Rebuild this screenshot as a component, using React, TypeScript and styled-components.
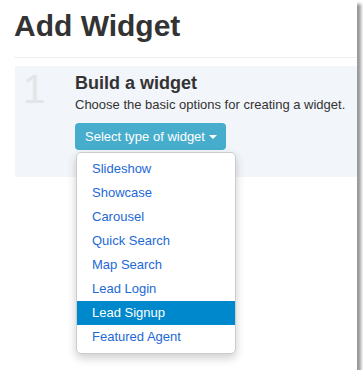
import React from 'react';
import styled, { createGlobalStyle } from 'styled-components';

const GlobalStyle = createGlobalStyle`
  html, body {
    margin: 0;
    padding: 0;
    background: #fff;
  }
  body {
    font-family: "Liberation Sans", Arial, sans-serif;
    color: #333;
  }
`;

const widgetTypes = [
  'Slideshow',
  'Showcase',
  'Carousel',
  'Quick Search',
  'Map Search',
  'Lead Login',
  'Lead Signup',
  'Featured Agent',
];

const Frame = styled.div`
  width: 357px;
  height: 370px;
  background: #fff;
  box-shadow: 4px 4px 3px rgba(0, 0, 0, 0.4);
  overflow: hidden;
  padding-left: 14px;
  box-sizing: border-box;
`;

const Heading = styled.h1`
  margin: 0;
  padding-top: 9px;
  font-size: 30px;
  line-height: 33px;
  font-weight: bold;
  color: #333;
  padding-bottom: 15px;
  border-bottom: 1px solid #eee;
`;

const StepPanel = styled.div`
  display: flex;
  margin-top: 8px;
  margin-left: 1px;
  height: 111px;
  background: #f2f5f9;
`;

const StepNumber = styled.div`
  width: 60px;
  padding: 3px 0 0 8px;
  box-sizing: border-box;
  font-size: 40px;
  line-height: 40px;
  color: #e3e5e8;
`;

const StepBody = styled.div`
  display: flex;
  flex-direction: column;
  padding-top: 7px;
`;

const StepTitle = styled.h2`
  margin: 0;
  font-size: 18px;
  line-height: 20px;
  font-weight: bold;
  color: #333;
`;

const StepText = styled.p`
  margin: 3px 0 0;
  font-size: 13px;
  line-height: 18px;
  color: #333;
`;

const DropdownWrap = styled.div`
  position: relative;
  margin-top: 9px;
  align-self: flex-start;
`;

const ToggleButton = styled.button`
  display: flex;
  align-items: center;
  gap: 4px;
  height: 27px;
  padding: 0 9px 0 10px;
  border: none;
  border-radius: 4px;
  background: #47adcc;
  color: #fff;
  font-family: "Liberation Sans", Arial, sans-serif;
  font-size: 13px;
  cursor: pointer;
`;

const Caret = styled.span`
  width: 0;
  height: 0;
  border-left: 4px solid transparent;
  border-right: 4px solid transparent;
  border-top: 4px solid #fff;
  margin-top: 1px;
`;

const Menu = styled.ul`
  position: absolute;
  top: 100%;
  left: 1px;
  width: 160px;
  box-sizing: border-box;
  margin: 2px 0 0;
  padding: 4px 0;
  list-style: none;
  background: #fff;
  border: 1px solid #ccc;
  border-radius: 5px;
  box-shadow: 0 4px 10px rgba(0, 0, 0, 0.2);
  z-index: 10;
`;

const MenuItem = styled.li<{ $active?: boolean }>`
  height: 24px;
  line-height: 24px;
  padding-left: 15px;
  font-size: 13px;
  color: ${(p) => (p.$active ? '#fff' : '#1d69d6')};
  background: ${(p) => (p.$active ? '#0088cc' : 'transparent')};
  white-space: nowrap;
`;

const App: React.FC = () => {
  return (
    <>
      <GlobalStyle />
      <Frame>
        <Heading>Add Widget</Heading>
        <StepPanel>
          <StepNumber>1</StepNumber>
          <StepBody>
            <StepTitle>Build a widget</StepTitle>
            <StepText>Choose the basic options for creating a widget.</StepText>
            <DropdownWrap>
              <ToggleButton>
                Select type of widget
                <Caret />
              </ToggleButton>
              <Menu>
                {widgetTypes.map((name) => (
                  <MenuItem key={name} $active={name === 'Lead Signup'}>
                    {name}
                  </MenuItem>
                ))}
              </Menu>
            </DropdownWrap>
          </StepBody>
        </StepPanel>
      </Frame>
    </>
  );
};

export default App;
